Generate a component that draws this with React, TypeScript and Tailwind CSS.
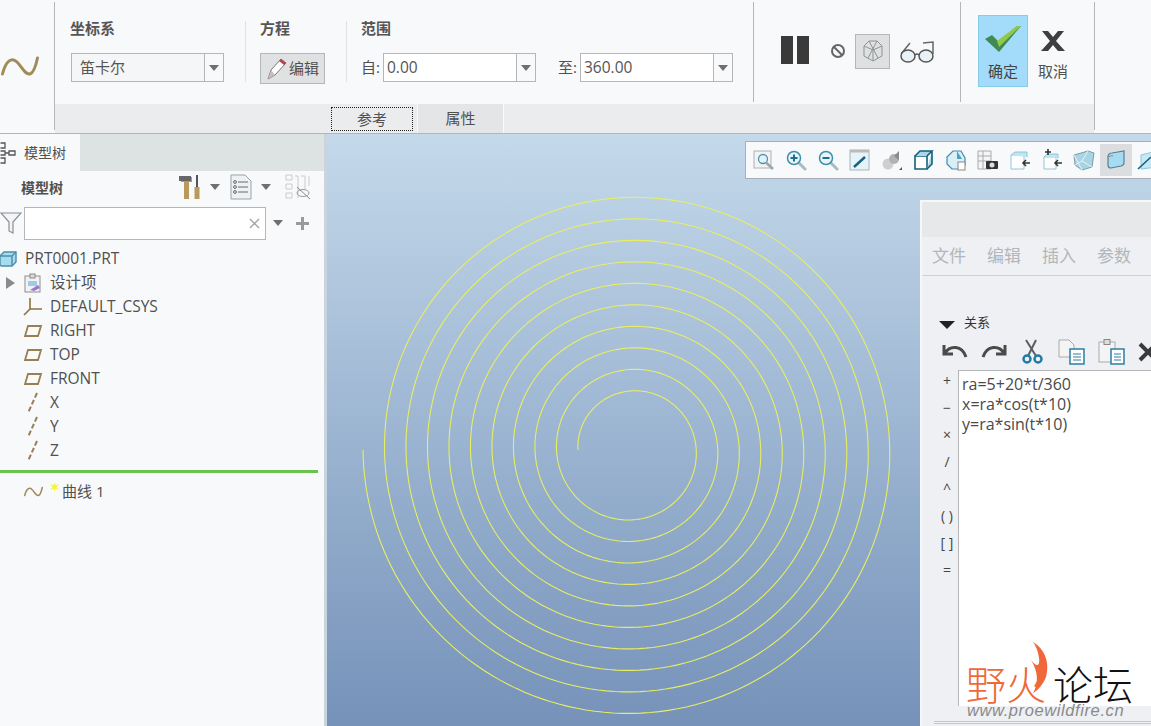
import React from "react";

const FONT = { fontFamily: '"Open Sans","Noto Sans CJK SC",sans-serif' };

function spiralPath() {
  const cx = 304.75, cy = 316, k = 10.75;
  let d = "";
  for (let i = 0; i <= 3600; i += 2) {
    const t = i / 10;
    const r = (5 + (20 * t) / 360) * k;
    const a = (t * 10 * Math.PI) / 180;
    const x = cx - r * Math.cos(a);
    const y = cy - r * Math.sin(a);
    d += (i === 0 ? "M" : "L") + x.toFixed(2) + " " + y.toFixed(2);
  }
  return d;
}

function Tri({ className = "" }: { className?: string }) {
  return <span className={"inline-block w-0 h-0 border-l-[5px] border-r-[5px] border-t-[6px] border-l-transparent border-r-transparent border-t-[#6f6f6f] " + className} />;
}

function Combo({ text, white, w }: { text: string; white?: boolean; w: string }) {
  return (
    <div className={"flex h-[29px] border border-[#b4b6b8] " + w + " " + (white ? "bg-white" : "bg-[#f5f6f7]")}>
      <div className={"flex-1 flex items-center text-[#555] " + (white ? "pl-[3px] text-[15.5px]" : "pl-[8px] text-[15px]")}>{text}</div>
      <div className="w-[19px] flex items-center justify-center border-l border-[#b4b6b8] bg-[#f8f9fa]"><Tri /></div>
    </div>
  );
}

function Curve({ w = 38, h = 20, sw = 3 }: { w?: number; h?: number; sw?: number }) {
  return (
    <svg width={w} height={h} viewBox="0 0 38 20">
      <path d="M1.5 18 C5 4 11 1 16 6 C21 11 24 19 29 18 C33 17 35 9 36.5 2" fill="none" stroke="#a08c58" strokeWidth={sw} strokeLinecap="round" />
    </svg>
  );
}

function Plane() {
  return <svg width="20" height="14" viewBox="0 0 20 14"><path d="M5 2H18L15 12H2Z" fill="#fbfaf5" stroke="#957f57" strokeWidth="1.8" /></svg>;
}
function Axis() {
  return <svg width="14" height="22" viewBox="0 0 14 22"><path d="M11 1L2 21" stroke="#957f57" strokeWidth="2" strokeDasharray="5 2.5" /></svg>;
}

function TreeRow({ icon, label, indent }: { icon?: React.ReactNode; label: React.ReactNode; indent?: React.ReactNode }) {
  return (
    <div className="h-[24px] flex items-center text-[15.5px] text-[#505050]">
      <div className="w-[10px] flex justify-start ml-[6px]">{indent}</div>
      <div className="w-[34px] flex items-center justify-center">{icon}</div>
      <div>{label}</div>
    </div>
  );
}

function Mag({ sign }: { sign?: "+" | "-" }) {
  return (
    <svg width="22" height="22" viewBox="0 0 22 22">
      <path d="M13 13L20 20" stroke="#a9bcc4" strokeWidth="3" strokeLinecap="round" />
      <circle cx="9" cy="9" r="6.5" fill="#eaf5fa" stroke="#3d8fae" strokeWidth="1.5" />
      {sign && <path d="M5.5 9H12.5" stroke="#1d6f90" strokeWidth="2" />}
      {sign === "+" && <path d="M9 5.5V12.5" stroke="#1d6f90" strokeWidth="2" />}
    </svg>
  );
}

const viewIcons: React.ReactNode[] = [
  <svg key="a" width="22" height="22" viewBox="0 0 22 22"><rect x="1" y="2" width="17" height="17" fill="#f3f3f3" stroke="#a8b4b8" /><circle cx="10" cy="10" r="4.5" fill="#e3f2f9" stroke="#4b93ae" strokeWidth="1.3" /><path d="M13 13.5L20 20" stroke="#9aa8ae" strokeWidth="2.5" /></svg>,
  <Mag key="b" sign="+" />,
  <Mag key="c" sign="-" />,
  <svg key="d" width="22" height="22" viewBox="0 0 22 22"><rect x="1" y="1" width="19" height="20" fill="#e6f3f9" stroke="#a8b4b8" /><rect x="1" y="1" width="19" height="2.5" fill="#b9bcbc" /><path d="M5 18L16 8" stroke="#13627f" strokeWidth="2.4" /></svg>,
  <svg key="e" width="22" height="22" viewBox="0 0 22 22"><circle cx="7" cy="15" r="5.5" fill="#cfcfcf" /><circle cx="13" cy="10" r="5" fill="#b2b2b2" /><path d="M13 7L18 2V11Z" fill="#8b8b8b" /><path d="M21 21H18L21 18Z" fill="#555" /></svg>,
  <svg key="f" width="22" height="22" viewBox="0 0 22 22"><path d="M2 7H14V20H2Z" fill="#fff" stroke="#15607c" strokeWidth="1.6" /><path d="M2 7L7 2H19L14 7M14 20L19 15V2" fill="#a8d6ea" stroke="#15607c" strokeWidth="1.6" /></svg>,
  <svg key="g" width="22" height="22" viewBox="0 0 22 22"><path d="M2 8L8 2H16L20 9V16L14 20H7L2 15Z" fill="#d9eef7" stroke="#3f8eae" strokeWidth="1.2" /><path d="M12 2L17 10H12Z" fill="#4f9fc0" /><rect x="13" y="13" width="7" height="8" fill="#fff" stroke="#888" /></svg>,
  <svg key="h" width="22" height="22" viewBox="0 0 22 22"><path d="M1 2H14V20H1ZM1 7H14M1 12H14M6 2V20" fill="#f5f5f5" stroke="#aaa" /><rect x="9" y="12" width="12" height="8" rx="1" fill="#333" /><circle cx="15" cy="16" r="2.5" fill="#ddd" /></svg>,
  <svg key="i" width="22" height="22" viewBox="0 0 22 22"><path d="M2 6H15V20H2Z" fill="#fff" stroke="#8fc6dc" /><path d="M2 6L6 3H18V8" fill="#bfe4f3" stroke="#8fc6dc" /><path d="M14 14H21M17 11L14 14L17 17" fill="none" stroke="#333" strokeWidth="1.6" /></svg>,
  <svg key="j" width="22" height="22" viewBox="0 0 22 22"><path d="M3 8H15V20H3Z" fill="#fff" stroke="#8fc6dc" /><path d="M3 8L6 5H17V9" fill="#bfe4f3" stroke="#8fc6dc" /><path d="M7 0V6M4 3H10M14 14H21M17 11L14 14L17 17" fill="none" stroke="#333" strokeWidth="1.6" /></svg>,
  <svg key="k" width="22" height="22" viewBox="0 0 22 22"><path d="M1 6L15 2L21 4L19 18L9 21L2 16Z" fill="#a9d4e4" stroke="#7c9dab" /><path d="M1 6L9 21M15 2L9 12L2 16M9 12L19 18" fill="none" stroke="#e6f3f8" /></svg>,
  <svg key="l" width="22" height="22" viewBox="0 0 22 22"><path d="M3 8Q3 4 7 4L19 2V14Q19 16 16 17L6 19Q3 19 3 16Z" fill="#a6dcf3" stroke="#5a7f8f" strokeWidth="1.2" /><path d="M3 8Q7 6 8 7" fill="none" stroke="#888" /></svg>,
  <svg key="m" width="22" height="22" viewBox="0 0 22 22"><path d="M4 6L20 2V18L4 20Z" fill="#c6e7f4" stroke="#8fc6dc" /><path d="M1 20L14 8" stroke="#13627f" strokeWidth="1.6" /></svg>,
];

export default function App() {
  return (
    <div className="w-[1151px] h-[726px] overflow-hidden flex flex-col bg-[#f8f9fb] text-[#505050]" style={FONT}>
      {/* Dashboard ribbon */}
      <div className="h-[134px] shrink-0 flex border-b border-[#b0b6ba] bg-[#f8f9fb]">
        <div className="w-[55px] shrink-0 flex items-center mb-[3px] mt-[2px] border-r border-[#b4b7ba]"><div className="ml-[1px]"><Curve /></div></div>
        <div className="w-[1039px] shrink-0 flex flex-col">
          <div className="h-[104px] flex">
            <div className="w-[191px] mt-[21px] h-[61px] pl-[15px] flex flex-col border-r border-[#e0e2e4]">
              <div className="h-[16px] -mt-[1px] leading-[16px] text-[15px] font-semibold text-[#555]">坐标系</div>
              <div className="mt-[17px] ml-[1px]"><Combo text="笛卡尔" w="w-[153px]" /></div>
            </div>
            <div className="w-[101px] mt-[21px] h-[61px] pl-[14px] flex flex-col border-r border-[#e0e2e4]">
              <div className="h-[16px] -mt-[1px] leading-[16px] text-[15px] font-semibold text-[#555]">方程</div>
              <div className="mt-[17px] w-[65px] h-[31px] shrink-0 bg-[#e0e1e2] border border-[#b4b6b8] flex items-center justify-center gap-[1px] text-[15px]">
                <svg width="22" height="24" viewBox="0 0 22 24"><path d="M2 22L5 13L15 2L20 6L9 18Z" fill="#fff" stroke="#777" /><path d="M15 2L20 6L18 8L13 4Z" fill="#b8454a" /><path d="M2 22L5 13L9 18Z" fill="#cbb" /></svg>
                <span>编辑</span>
              </div>
            </div>
            <div className="w-[406px] mt-[21px] h-[61px] pl-[14px] flex flex-col">
              <div className="h-[16px] -mt-[1px] leading-[16px] text-[15px] font-semibold text-[#555]">范围</div>
              <div className="mt-[17px] flex items-center text-[15px]">
                <span className="w-[22px]">自:</span>
                <Combo text="0.00" white w="w-[153px]" />
                <span className="ml-[22px] w-[22px]">至:</span>
                <Combo text="360.00" white w="w-[153px]" />
              </div>
            </div>
            <div className="w-[208px] h-[100px] mt-[2px] flex items-center border-l border-r border-[#b4b7ba] pl-[27px] pb-[10px]">
              <div className="flex gap-[4px] mt-[6px]"><div className="w-[12px] h-[28px] bg-[#3a3a3a]" /><div className="w-[12px] h-[28px] bg-[#3a3a3a]" /></div>
              <svg className="ml-[21px] mt-[8px]" width="16" height="16" viewBox="0 0 16 16"><circle cx="8" cy="8" r="6" fill="none" stroke="#666" strokeWidth="2" /><path d="M4 4L12 12" stroke="#666" strokeWidth="2" /></svg>
              <div className="ml-[9px] mt-[8px] w-[35px] h-[35px] bg-[#dfe0e1] border border-[#b4b6b8] flex items-center justify-center">
                <svg width="26" height="26" viewBox="0 0 26 26"><path d="M4 8L9 3M22 8L17 3M4 8L13 12L22 8M4 8V18L13 23L22 18V8M13 12V23M9 3L18 20M17 3L8 20M9 3H17" fill="none" stroke="#8f9496" strokeWidth="1" /></svg>
              </div>
              <svg className="ml-[9px] mt-[10px]" width="36" height="24" viewBox="0 0 36 24"><path d="M2 14L11 3M24 3L34 2V14" fill="none" stroke="#666" strokeWidth="1.5" /><ellipse cx="9" cy="16" rx="7" ry="6" fill="#e9f3f7" stroke="#555" strokeWidth="1.5" /><ellipse cx="27" cy="16" rx="7" ry="6" fill="#e9f3f7" stroke="#555" strokeWidth="1.5" /><path d="M16 15Q18 13 20 15" fill="none" stroke="#555" strokeWidth="1.5" /></svg>
            </div>
            <div className="flex-1 h-[100px] mt-[2px] pl-[17px] pt-[13px] flex">
              <div className="w-[50px] h-[72px] bg-[#a2dcfa] border border-[#86cce9] flex flex-col items-center text-[15px] text-[#444]">
                <svg className="mt-[9px]" width="38" height="28" viewBox="0 0 38 28"><path d="M1 14L8 10L15 17L33 1H37L15 27Z" fill="#3f8a4f" /><path d="M33 1H37L15 22L13 16Z" fill="#92c84a" /></svg>
                <span className="mt-[9px] leading-[18px]">确定</span>
              </div>
              <div className="w-[50px] h-[72px] flex flex-col items-center text-[15px]">
                <svg className="mt-[15px]" width="26" height="22" viewBox="0 0 26 22"><path d="M2 1H8L13 7L18 1H24L16 11L25 21H18L13 15L8 21H1L10 11Z" fill="#3f3f3f" /></svg>
                <span className="mt-[10px] leading-[18px]">取消</span>
              </div>
            </div>
          </div>
          <div className="h-[29px] bg-[#ebecee] flex pl-[276px] text-[15px]">
            <div className="w-[82px] h-[24px] mt-[3px] border border-dotted border-[#222] flex items-center justify-center">参考</div>
            <div className="w-[87px] h-[29px] ml-[4px] bg-[#e4e5e7] border-l border-r border-[#fafafa] flex items-center justify-center">属性</div>
          </div>
        </div>
        <div className="w-px h-[128px] mt-[2px] bg-[#b4b7ba]" />
      </div>

      <div className="flex-1 flex min-h-0">
        {/* Model tree */}
        <div className="w-[327px] shrink-0 flex flex-col bg-[#f8f9fb] border-r-[3px] border-[#c9d4df]">
          <div className="h-[37px] shrink-0 bg-[#dde2e3] flex">
            <div className="w-[80px] bg-[#f8f9fb] flex items-center text-[14px] gap-[8px]">
              <svg width="16" height="22" viewBox="0 0 16 22" className="shrink-0"><path d="M0.5 1H5V6H0.5M0.5 9H5V13H0.5M0.5 16H5V21H0.5M5 11H9M9 9H15V13H9Z" fill="none" stroke="#555" strokeWidth="1.3" /></svg>
              <span>模型树</span>
            </div>
          </div>
          <div className="h-[36px] flex items-center shrink-0 pb-[4px]">
            <span className="ml-[21px] text-[14px] font-semibold">模型树</span>
            <svg className="ml-[115px]" width="24" height="26" viewBox="0 0 24 26"><path d="M3 3H14V8H11V25H6V8H3Z" fill="#b89a5a" /><path d="M1 2H13V7H1Z" fill="#666" /><path d="M18 1H20V13H18Z" fill="#555" /><path d="M16.5 13H21.5V25H16.5Z" fill="#b89a5a" /></svg>
            <Tri className="ml-[8px]" />
            <svg className="ml-[10px]" width="22" height="26" viewBox="0 0 22 26"><path d="M1 1H15L21 7V25H1Z" fill="#eef1f3" stroke="#9aa3a8" /><path d="M8 8H18M8 13H18M8 18H18" stroke="#666" /><circle cx="5" cy="8" r="1.4" fill="none" stroke="#666" /><circle cx="5" cy="13" r="1.4" fill="none" stroke="#666" /><circle cx="5" cy="18" r="1.4" fill="none" stroke="#666" /></svg>
            <Tri className="ml-[9px]" />
            <svg className="ml-[14px]" width="26" height="26" viewBox="0 0 26 26"><path d="M1 1H7V6H1ZM1 10H7V15H1ZM1 19H7V24H1ZM10 2H13V24M16 2H20V16M24 2V12" fill="none" stroke="#c8cccf" /><ellipse cx="18" cy="19" rx="6" ry="3.5" fill="none" stroke="#999" /><path d="M12 13L25 25" stroke="#888" /></svg>
          </div>
          <div className="h-[32px] flex items-center shrink-0">
            <svg width="22" height="24" viewBox="0 0 22 24"><path d="M1 2H21L13 11V22L9 20V11Z" fill="#f2f4f5" stroke="#8a9094" strokeWidth="1.2" /></svg>
            <div className="ml-[2px] w-[242px] h-[33px] border border-[#b4b6b8] bg-white flex items-center justify-end pr-[5px]">
              <svg width="11" height="11" viewBox="0 0 12 12"><path d="M1 1L11 11M11 1L1 11" stroke="#a5a5a5" strokeWidth="1.5" /></svg>
            </div>
            <Tri className="ml-[7px]" />
            <svg className="ml-[12px]" width="15" height="15" viewBox="0 0 15 15"><path d="M7.5 1V14M1 7.5H14" stroke="#9a9a9a" strokeWidth="3" /></svg>
          </div>
          <div className="pt-[8px] shrink-0">
            <div className="h-[24px] flex items-center text-[15.5px]">
              <svg className="-ml-[1px]" width="18" height="16" viewBox="0 0 18 16"><path d="M1 5L5 1H17V11L13 15H3Q1 15 1 13Z" fill="#a5dcf2" stroke="#4d8ca8" strokeWidth="1.4" /><path d="M1 5H13V15M13 5L17 1" fill="none" stroke="#4d8ca8" strokeWidth="1.4" /></svg>
              <span className="ml-[8px]">PRT0001.PRT</span>
            </div>
            <TreeRow label="设计项" indent={<span className="block w-0 h-0 border-y-[6px] border-l-[9px] border-y-transparent border-l-[#8a8a8a]" />} icon={
              <svg width="20" height="20" viewBox="0 0 20 20"><rect x="2" y="3" width="15" height="16" fill="#f2f2f2" stroke="#8e8e8e" /><rect x="7" y="1" width="5" height="4" fill="#ddd" stroke="#888" /><rect x="5" y="8" width="9" height="5" fill="#9ec9ec" /><path d="M7 17L15 12L17 15L11 18Z" fill="#9d78c8" /></svg>
            } />
            <TreeRow label="DEFAULT_CSYS" icon={<svg width="20" height="20" viewBox="0 0 20 20"><path d="M7 1V12M7 12H19M7 12L1 18" stroke="#8b733f" strokeWidth="1.6" fill="none" /></svg>} />
            <TreeRow label="RIGHT" icon={<Plane />} />
            <TreeRow label="TOP" icon={<Plane />} />
            <TreeRow label="FRONT" icon={<Plane />} />
            <TreeRow label="X" icon={<Axis />} />
            <TreeRow label="Y" icon={<Axis />} />
            <TreeRow label="Z" icon={<Axis />} />
          </div>
          <div className="h-[3px] w-[318px] mt-[7px] bg-[#6cc24f] shrink-0" />
          <div className="mt-[6px] h-[24px] flex items-center text-[15px]">
            <div className="w-[50px] pl-[24px]"><Curve w={19} h={11} sw={3} /></div>
            <span className="w-[9px] h-[9px] -mt-[8px] bg-[#f4f43c] [clip-path:polygon(50%_0,62%_30%,100%_20%,72%_50%,100%_80%,62%_70%,50%_100%,38%_70%,0_80%,28%_50%,0_20%,38%_30%)]" />
            <span className="ml-[3px]">曲线 1</span>
          </div>
        </div>

        {/* Graphics window */}
        <div className="relative flex-1 overflow-hidden bg-gradient-to-b from-[#c4d9ea] to-[#7692b9]">
          <svg className="absolute left-0 top-0" width="824" height="592" viewBox="0 0 824 592">
            <path d={spiralPath()} fill="none" stroke="#e7ee62" strokeWidth="1.1" />
          </svg>

          {/* Graphics toolbar */}
          <div className="absolute left-[418px] top-[7px] w-[420px] h-[38px] bg-[#f8f9fb] border border-[#a8aeb3] flex items-center pl-[7px] gap-[10px]">
            {viewIcons.map((ic, i) => (
              <div key={i} className={"w-[22px] h-[22px] shrink-0 flex items-center justify-center " + (i === 11 ? "outline-[5px] outline-solid outline-[#dcdde0] bg-[#dcdde0]" : "")}>{ic}</div>
            ))}
          </div>

          {/* Relations dialog */}
          <div className="absolute left-[593px] top-[66px] w-[300px] h-[540px] bg-[#eef0f3] border-l-2 border-t-2 border-[#f6f7f8] flex flex-col">
            <div className="h-[35px] shrink-0 bg-[#e7e8ea]" />
            <div className="h-[39px] shrink-0 border-b border-[#d0d2d4] flex items-center pl-[10px] gap-[21px] text-[17px] text-[#b3b6b9]">
              <span>文件</span><span>编辑</span><span>插入</span><span>参数</span>
            </div>
            <div className="h-[57px] shrink-0 flex items-end pb-[1px] pl-[17px] text-[13px] text-[#333]">
              <span className="block w-0 h-0 mb-[3px] border-x-[8px] border-t-[8px] border-x-transparent border-t-[#222]" />
              <span className="ml-[9px] leading-[20px]">关系</span>
            </div>
            <div className="h-[37px] shrink-0 flex items-center pl-[20px]">
              <svg width="26" height="20" viewBox="0 0 26 20"><path d="M2 3V12H11M3 11C8 3 20 3 24 15" fill="none" stroke="#4a4a4a" strokeWidth="3" /></svg>
              <svg className="ml-[13px]" width="26" height="20" viewBox="0 0 26 20"><path d="M24 3V12H15M23 11C18 3 6 3 2 15" fill="none" stroke="#4a4a4a" strokeWidth="3" /></svg>
              <svg className="ml-[14px]" width="22" height="26" viewBox="0 0 22 26"><path d="M5 1L15 17M15 1L7 17" stroke="#5e5e5e" strokeWidth="2" /><circle cx="6" cy="20" r="3.5" fill="none" stroke="#1f7aa5" strokeWidth="2.4" /><circle cx="17" cy="20" r="3.5" fill="none" stroke="#1f7aa5" strokeWidth="2.4" /></svg>
              <svg className="ml-[15px]" width="27" height="26" viewBox="0 0 27 26"><path d="M1 1H11L16 6V18H1Z" fill="#f4f4f4" stroke="#aaa" /><rect x="12" y="10" width="14" height="15" fill="#fff" stroke="#2d7da3" strokeWidth="1.5" /><path d="M15 15H23M15 18H23M15 21H23" stroke="#2d7da3" /></svg>
              <svg className="ml-[13px]" width="27" height="26" viewBox="0 0 27 26"><rect x="1" y="3" width="16" height="20" fill="#f4f4f4" stroke="#aaa" /><rect x="6" y="0.5" width="6" height="5" fill="#ddd" stroke="#888" /><rect x="13" y="10" width="13" height="15" fill="#fff" stroke="#2d7da3" strokeWidth="1.5" /><path d="M16 15H23M16 18H23M16 21H23" stroke="#2d7da3" /></svg>
              <svg className="ml-[13px]" width="20" height="20" viewBox="0 0 20 20"><path d="M2 2L18 18M18 2L2 18" stroke="#3a3a3a" strokeWidth="4" /></svg>
            </div>
            <div className="flex-1 flex min-h-0">
              <div className="w-[36px] shrink-0 flex flex-col items-center pl-[14px] -mt-[3px] text-[#444] text-[14px]">
                {["+", "−", "×", "/", "^", "( )", "[ ]", "="].map((s) => (
                  <div key={s} className="h-[27px] leading-[27px] whitespace-nowrap">{s}</div>
                ))}
              </div>
              <div className="w-[262px] h-[336px] bg-white border-l border-t border-[#b4b6b8] pl-[3px] pt-[3px] text-[16px] leading-[20px] text-[#4a4a4a]">
                <div>ra=5+20*t/360</div>
                <div>x=ra*cos(t*10)</div>
                <div>y=ra*sin(t*10)</div>
              </div>
            </div>
            <div className="absolute left-[12px] right-0 bottom-[16px] h-[3px] border-y border-[#c4c6c9]" />
          </div>

          {/* Watermark */}
          <div className="absolute left-[639px] top-[507px] w-[190px] h-[85px]">
            <span className="absolute left-0 top-[24px] text-[40px] leading-[36px] font-light text-[#f0683a]" style={{ fontFamily: '"Noto Sans CJK SC",sans-serif' }}>野火</span>
            <svg className="absolute left-[64px] top-0" width="20" height="54" viewBox="0 0 20 54"><path d="M3 1C15 8 20 22 16 36C13 44 7 50 3 52C9 42 8 30 1 19C7 27 10 25 9 17C8 10 6 5 3 1Z" fill="#f0683a" /></svg>
            <span className="absolute left-[87px] top-[24px] text-[40px] leading-[36px] font-light text-[#111]" style={{ fontFamily: '"Noto Sans CJK SC",sans-serif' }}>论坛</span>
            <span className="absolute left-[1px] top-[61px] text-[16.5px] leading-[16px] italic tracking-[0.6px] text-[#8a8a8a] whitespace-nowrap" style={{ fontFamily: '"Liberation Sans",sans-serif' }}>www.proewildfire.cn</span>
          </div>
        </div>
      </div>
    </div>
  );
}
